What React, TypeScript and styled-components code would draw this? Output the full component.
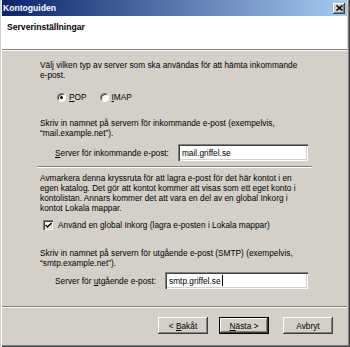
import React from 'react'
import styled, { createGlobalStyle } from 'styled-components'

const face = '#D4D0C8'
const shadow = '#808080'
const darkShadow = '#404040'

const GlobalStyle = createGlobalStyle`
  html, body {
    margin: 0;
    padding: 0;
    background: ${face};
  }
  body {
    font-family: 'Liberation Sans', Arial, sans-serif;
  }
`

const Window = styled.div`
  width: 350px;
  height: 347px;
  box-sizing: border-box;
  display: flex;
  flex-direction: column;
  padding: 0 3px 3px 2px;
  background: ${face};
  box-shadow: inset 1px 0 ${face}, inset 2px 0 #fff, inset -1px -1px ${darkShadow},
    inset -2px -2px ${shadow};
  font-size: 8.3px;
  color: #000;
`

const TitleBar = styled.div`
  height: 16px;
  display: flex;
  align-items: center;
  justify-content: space-between;
  padding: 0 2px 0 1px;
  background: linear-gradient(to right, #0a246a, #a6caf0);
`

const TitleText = styled.span`
  color: #fff;
  font-weight: bold;
  font-size: 8.6px;
`

const CloseButton = styled.div`
  width: 12px;
  height: 11px;
  display: flex;
  align-items: center;
  justify-content: center;
  background: ${face};
  box-shadow: inset -1px -1px ${darkShadow}, inset 1px 1px #fff, inset -2px -2px ${shadow};
`

const Header = styled.div`
  height: 33px;
  box-sizing: border-box;
  padding: 6px 0 0 5px;
  background: #fff;
  font-weight: bold;
  font-size: 8.6px;
  line-height: 10px;
`

const Groove = styled.div<{ $inset?: number }>`
  height: 0;
  border-top: 1px solid ${shadow};
  border-bottom: 1px solid #fff;
  margin-left: ${({ $inset }) => ($inset ? `-${$inset}px` : '0')};
`

const Body = styled.div`
  flex: 1;
  display: flex;
  flex-direction: column;
  padding: 0 35px 0 38px;
`

const Text = styled.p<{ $mt: number }>`
  margin: ${({ $mt }) => $mt}px 0 0;
  line-height: 10px;
  white-space: nowrap;
`

const Spacer = styled.div<{ $h: number }>`
  height: ${({ $h }) => $h}px;
  flex: none;
`

const RadioRow = styled.div`
  margin-top: 11px;
  height: 12px;
  display: flex;
  align-items: center;
  padding-left: 17px;
`

const RadioOption = styled.label<{ $mr?: number }>`
  display: flex;
  align-items: center;
  gap: 3px;
  margin-right: ${({ $mr }) => $mr || 0}px;
`

const RadioCircle = styled.span<{ $checked?: boolean }>`
  width: 9px;
  height: 9px;
  box-sizing: border-box;
  border-radius: 50%;
  background: #fff;
  border: 1px solid;
  border-color: ${shadow} #fff #fff ${shadow};
  box-shadow: inset 1px 1px ${darkShadow};
  display: flex;
  align-items: center;
  justify-content: center;
  &::after {
    content: '';
    width: 3px;
    height: 3px;
    border-radius: 50%;
    background: #000;
    display: ${({ $checked }) => ($checked ? 'block' : 'none')};
  }
`

const FieldRow = styled.div<{ $mt: number }>`
  margin-top: ${({ $mt }) => $mt}px;
  height: 17px;
  display: flex;
  align-items: center;
  padding: 0 4px 0 15px;
`

const FieldLabel = styled.span`
  white-space: nowrap;
  margin-right: 9px;
`

const TextBox = styled.div`
  flex: 1;
  height: 17px;
  box-sizing: border-box;
  display: flex;
  align-items: center;
  padding-left: 4px;
  background: #fff;
  box-shadow: inset 1px 1px ${shadow}, inset 2px 2px ${darkShadow}, inset -1px -1px #fff,
    inset -2px -2px ${face};
`

const Caret = styled.span`
  width: 1px;
  height: 11px;
  background: #000;
  margin-left: 1px;
`

const CheckRow = styled.label`
  margin-top: 6px;
  height: 12px;
  display: flex;
  align-items: center;
  gap: 5px;
  padding-left: 3px;
  white-space: nowrap;
`

const CheckBox = styled.span`
  width: 10px;
  height: 10px;
  box-sizing: border-box;
  background: #fff;
  box-shadow: inset 1px 1px ${shadow}, inset 2px 2px ${darkShadow}, inset -1px -1px #fff,
    inset -2px -2px ${face};
  display: flex;
  align-items: center;
  justify-content: center;
`

const Footer = styled.div`
  height: 38px;
  display: flex;
  flex-direction: column;
`

const ButtonRow = styled.div`
  margin-top: 9px;
  display: flex;
  justify-content: flex-end;
  padding-right: 14px;
`

const Button = styled.button<{ $default?: boolean; $mr?: number }>`
  width: 50px;
  height: 17px;
  box-sizing: border-box;
  padding: 0;
  margin: 0 ${({ $mr }) => $mr || 0}px 0 0;
  font-family: inherit;
  font-size: 8.3px;
  color: #000;
  background: ${face};
  border: ${({ $default }) => ($default ? '1px solid #000' : 'none')};
  box-shadow: inset -1px -1px ${darkShadow}, inset 1px 1px #fff, inset -2px -2px ${shadow};
`

export default function App() {
  return (
    <>
      <GlobalStyle />
      <Window>
        <TitleBar>
          <TitleText>Kontoguiden</TitleText>
          <CloseButton>
            <svg width="7" height="6" viewBox="0 0 7 6">
              <path d="M0.5 0.5 L6.5 5.5 M6.5 0.5 L0.5 5.5" stroke="#000" strokeWidth="1.6" />
            </svg>
          </CloseButton>
        </TitleBar>
        <Header>Serverinställningar</Header>
        <Groove />
        <Body>
          <Text $mt={9}>
            Välj vilken typ av server som ska användas för att hämta inkommande
            <br />
            e-post.
          </Text>
          <RadioRow>
            <RadioOption $mr={13}>
              <RadioCircle $checked />
              <span>
                <u>P</u>OP
              </span>
            </RadioOption>
            <RadioOption>
              <RadioCircle />
              <span>
                <u>I</u>MAP
              </span>
            </RadioOption>
          </RadioRow>
          <Text $mt={15}>
            Skriv in namnet på servern för inkommande e-post (exempelvis,
            <br />
            “mail.example.net”).
          </Text>
          <FieldRow $mt={6}>
            <FieldLabel>
              <u>S</u>erver för inkommande e-post:
            </FieldLabel>
            <TextBox>mail.griffel.se</TextBox>
          </FieldRow>
          <Spacer $h={5} />
          <Groove $inset={3} />
          <Text $mt={5}>
            Avmarkera denna kryssruta för att lagra e-post för det här kontot i en
            <br />
            egen katalog. Det gör att kontot kommer att visas som ett eget konto i
            <br />
            kontolistan. Annars kommer det att vara en del av en global Inkorg i
            <br />
            kontot Lokala mappar.
          </Text>
          <CheckRow>
            <CheckBox>
              <svg width="7" height="7" viewBox="0 0 7 7">
                <path d="M0.5 3 L2.5 5 L6.5 1" fill="none" stroke="#000" strokeWidth="1.5" />
              </svg>
            </CheckBox>
            <span>Använd en global Inkorg (lagra e-posten i Lokala mappar)</span>
          </CheckRow>
          <Text $mt={17}>
            Skriv in namnet på servern för utgående e-post (SMTP) (exempelvis,
            <br />
            “smtp.example.net”).
          </Text>
          <FieldRow $mt={4}>
            <FieldLabel>
              Server för <u>u</u>tgående e-post:
            </FieldLabel>
            <TextBox>
              smtp.griffel.se
              <Caret />
            </TextBox>
          </FieldRow>
        </Body>
        <Footer>
          <Groove />
          <ButtonRow>
            <Button $mr={11}>
              &lt; <u>B</u>akåt
            </Button>
            <Button $default $mr={14}>
              <u>N</u>ästa &gt;
            </Button>
            <Button>Avbryt</Button>
          </ButtonRow>
        </Footer>
      </Window>
    </>
  )
}
